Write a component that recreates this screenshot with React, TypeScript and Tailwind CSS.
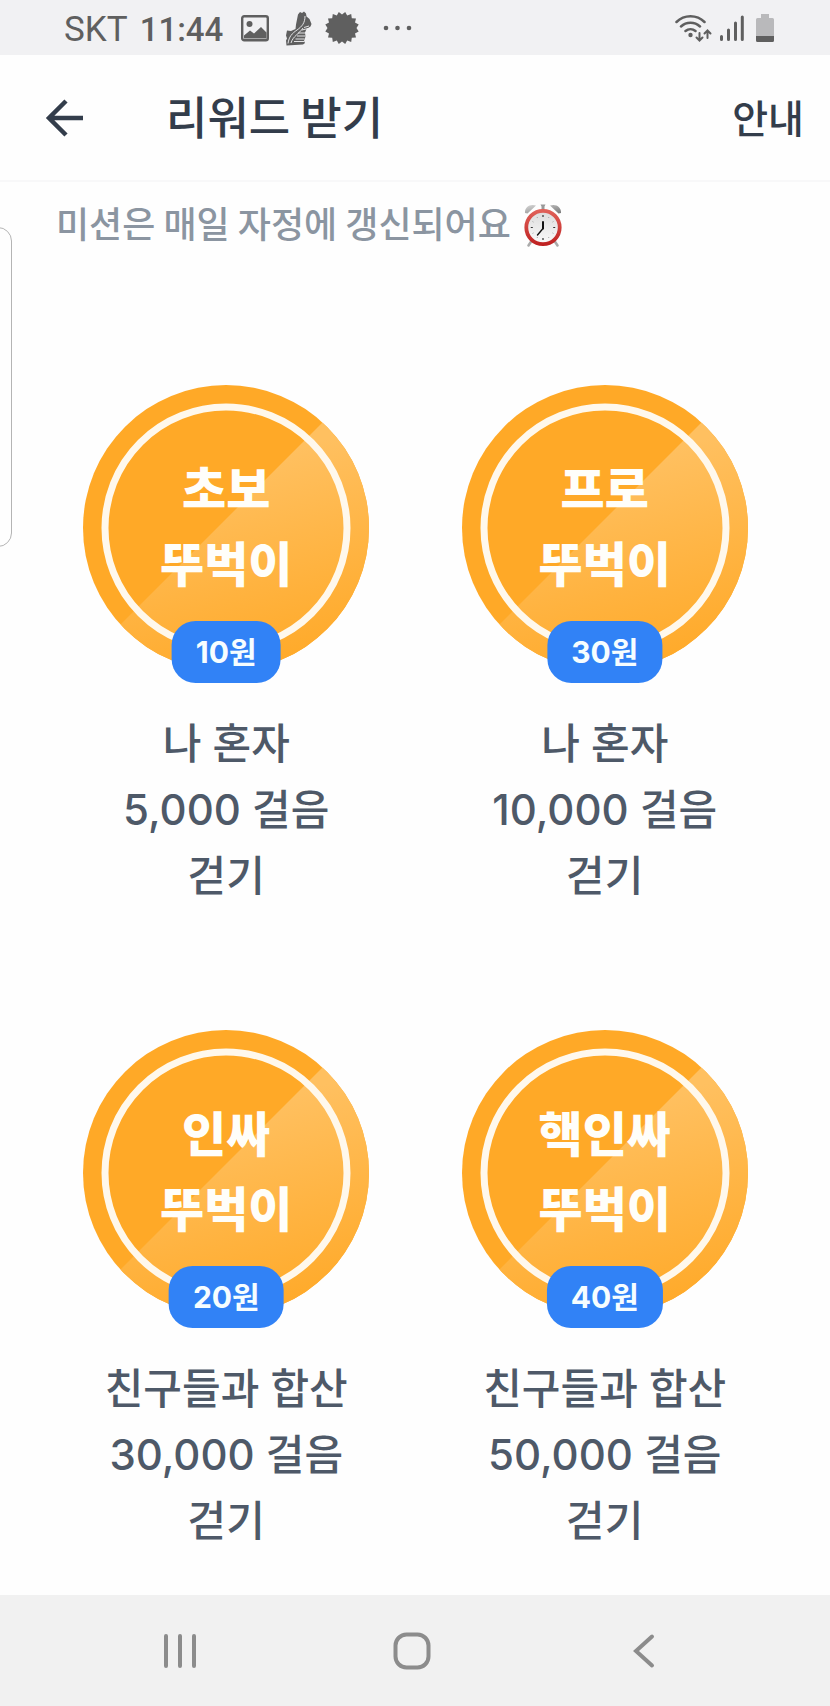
import type { ReactNode } from "react";

interface Mission {
  title: string;
  reward: string;
  lines: string[];
}

const missions: Mission[] = [
  { title: "초보", reward: "10원", lines: ["나 혼자", "5,000 걸음", "걷기"] },
  { title: "프로", reward: "30원", lines: ["나 혼자", "10,000 걸음", "걷기"] },
  { title: "인싸", reward: "20원", lines: ["친구들과 합산", "30,000 걸음", "걷기"] },
  { title: "핵인싸", reward: "40원", lines: ["친구들과 합산", "50,000 걸음", "걷기"] },
];

function StatusBar() {
  return (
    <div className="flex h-[55px] shrink-0 items-center justify-between bg-[#f1f1f3] pr-14 pl-16 font-['Roboto',sans-serif] text-[#5f5f5f]">
      <div className="flex items-center">
        <span className="pt-1 text-[35px] leading-[52px]">SKT</span>
        <span className="ml-3 pt-1 text-[33px] leading-[52px] font-medium">11:44</span>
        <svg className="ml-[18px] h-7 w-7" viewBox="0 0 28 28" fill="none">
          <rect x="1.2" y="2.2" width="25.6" height="24" rx="2" stroke="currentColor" strokeWidth="2.4" />
          <circle cx="8.5" cy="10" r="3" fill="currentColor" />
          <path d="M3 21.5l6-5 4 3 7-6.500 5.500 5.500v6H3z" fill="currentColor" />
        </svg>
        <svg className="ml-4 h-9 w-7" viewBox="0 0 28 36">
          <path
            d="M13 4.500l2-2.500 2 1 2-1.500 2 2 .5 3 3 2.500 2 5-1 2.500-4 2.500-1.500 3.500.5 4-1.500 4.500 1 2-2 1.500-16.500 1-.5-5 1-2-1-3 1-5 4 .5 4.500-2 .5-4.500z"
            fill="currentColor"
          />
          <path
            d="M3 33.500c1-7 4-10 9-13.500s8-7 8-14M6 33c2-7 8-9 12-15M13 23h8M12 26h8.500M10.500 29h9M9 31.500h10M19 17.500l5-1.500M17 20l6-1.500"
            fill="none"
            stroke="#f1f1f3"
            strokeWidth="0.9"
          />
        </svg>
        <svg className="ml-3 h-[34px] w-[34px]" viewBox="0 0 34 34" fill="currentColor">
          <path d="M17 3.500L20.200 .9 22.200 4.400 26.200 3.100 26.800 7.200 31 7.500 30 11.500 33.700 13.400 31.500 17 33.700 20.600 30 22.500 31 26.500 26.800 26.800 26.200 30.900 22.200 29.600 20.200 33.100 17 30.500 13.800 33.100 11.800 29.600 7.800 30.900 7.200 26.800 3 26.500 4 22.500 .3 20.600 2.500 17 .3 13.400 4 11.500 3 7.500 7.200 7.200 7.800 3.100 11.800 4.400 13.800 .9z" />
        </svg>
        <svg className="ml-6 h-2 w-[30px]" viewBox="0 0 30 8" fill="currentColor">
          <circle cx="3" cy="4" r="2.300" />
          <circle cx="14.500" cy="4" r="2.300" />
          <circle cx="26" cy="4" r="2.300" />
        </svg>
      </div>

      <div className="flex items-center gap-2">
        <svg className="h-7 w-[37px]" viewBox="0 0 37 28" fill="none" stroke="currentColor" strokeWidth="2.500" strokeLinecap="round">
          <path d="M1.500 8a20 20 0 0 1 28 0M6 12.500a14 14 0 0 1 19 0M10.500 17a8 8 0 0 1 10 0" />
          <circle cx="15.500" cy="21" r="2.200" fill="currentColor" stroke="none" />
          <path d="M24.500 19v7M21.500 23.500l3 3 3-3M32.500 24v-7M29.500 19.500l3-3 3 3" strokeWidth="2" />
        </svg>
        <svg className="h-7 w-6" viewBox="0 0 24 28" fill="none" stroke="currentColor" strokeWidth="3" strokeLinecap="round">
          <path d="M1.500 22.500v3M8.500 16v9.500M15.500 9v16.500M22.300 3v22.500" />
        </svg>
        <svg className="ml-1 h-7 w-[18px]" viewBox="0 0 18 28">
          <path d="M5 0h8v4h3.500a1.500 1.500 0 0 1 1.500 1.500V22H0V5.500A1.500 1.500 0 0 1 1.500 4H5z" fill="#b9b9bb" />
          <path d="M0 22h18v4.500a1.500 1.500 0 0 1-1.500 1.500h-15A1.500 1.500 0 0 1 0 26.500z" fill="currentColor" />
        </svg>
      </div>
    </div>
  );
}

function Header() {
  return (
    <header className="flex h-[127px] shrink-0 items-center border-b-2 border-[#f8f8f9] pr-[26px] pl-11 text-[#333d4b]">
      <button type="button" aria-label="뒤로" className="h-10 w-10">
        <svg className="h-10 w-10" viewBox="0 0 40 40" fill="none" stroke="currentColor" strokeWidth="4.500">
          <path d="M39 20H5M22 3L5 20l17 17" />
        </svg>
      </button>
      <h1 className="ml-[82px] pb-1 text-[45px] leading-[60px] font-medium">리워드 받기</h1>
      <button type="button" className="ml-auto pb-1 text-[39px] leading-[60px] font-medium">
        안내
      </button>
    </header>
  );
}

function AlarmClock() {
  return (
    <svg className="h-11 w-10" viewBox="0 0 40 44">
      <defs>
        <linearGradient id="bell" x1="0" y1="0" x2="1" y2="1">
          <stop offset="0" stopColor="#d8d8d8" />
          <stop offset="1" stopColor="#777" />
        </linearGradient>
        <linearGradient id="rim" x1="0" y1="0" x2="0" y2="1">
          <stop offset="0" stopColor="#e06058" />
          <stop offset="1" stopColor="#bf2222" />
        </linearGradient>
        <linearGradient id="face" x1="0" y1="0" x2="0" y2="1">
          <stop offset="0" stopColor="#dcdcdc" />
          <stop offset="1" stopColor="#fafafa" />
        </linearGradient>
      </defs>
      <path d="M8.500 38l-3 4.500M31.500 38l3 4.500" stroke="#aaa" strokeWidth="2.500" strokeLinecap="round" />
      <path d="M17.500 1.500h5l-1 2v4h-3v-4z" fill="#999" />
      <path d="M2 10C1.500 4 7 .5 13 2.500L4.500 10.500zM38 10C38.500 4 33 .5 27 2.500l8.500 8z" fill="url(#bell)" />
      <circle cx="20" cy="24.500" r="16.700" fill="url(#face)" stroke="url(#rim)" strokeWidth="3.800" />
      <path d="M20 12v2M20 35v2M7.800 24.500h2M30.200 24.500h2" stroke="#333" strokeWidth="1.200" />
      <path d="M26 14l-.6 1M14 14l.6 1M30.500 18.500l-1 .6M9.500 18.500l1 .6M30.500 30.500l-1-.6M9.500 30.500l1-.6M26 35l-.6-1M14 35l.6-1" stroke="#999" strokeWidth=".8" />
      <path d="M20 19v6.500" stroke="#111" strokeWidth="2" strokeLinecap="round" />
      <path d="M20 25.500l-5.500 6.500" stroke="#111" strokeWidth="1.400" strokeLinecap="round" />
    </svg>
  );
}

function Medal({ title, reward, id }: { title: string; reward: string; id: string }) {
  return (
    <div className="relative flex h-[286px] w-[286px] flex-col items-center pt-16">
      <svg className="absolute inset-0 h-full w-full" viewBox="0 0 286 286" aria-hidden="true">
        <defs>
          <clipPath id={`${id}-clip`}>
            <circle cx="143" cy="143" r="143" />
          </clipPath>
          <linearGradient id={`${id}-shine`} gradientUnits="userSpaceOnUse" x1="150" y1="80" x2="205" y2="275">
            <stop offset="0" stopColor="#ffc060" />
            <stop offset="1" stopColor="#ffaa2a" />
          </linearGradient>
        </defs>
        <circle cx="143" cy="143" r="143" fill="#ffa927" />
        <path d="M277 0H286V286H0V277z" fill={`url(#${id}-shine)`} clipPath={`url(#${id}-clip)`} />
        <circle cx="143" cy="143" r="121" fill="none" stroke="#fff8ec" strokeWidth="7" />
      </svg>
      <p className="relative text-center text-[48px] leading-[75px] font-black text-[#fffefa]">
        {title}
        <br />
        뚜벅이
      </p>
      <span className="absolute -bottom-3 left-1/2 flex h-[62px] -translate-x-1/2 items-center rounded-3xl bg-[#3182f6] px-6 font-['Inter','Noto_Sans_CJK_KR',sans-serif] text-[30px] font-bold whitespace-nowrap text-[#f6fdff]">
        {reward}
      </span>
    </div>
  );
}

function NavButton({ label, children }: { label: string; children: ReactNode }) {
  return (
    <button type="button" aria-label={label} className="flex items-center justify-center">
      <svg className="h-10 w-10" viewBox="0 0 40 40" fill="none" stroke="#8c8c8c" strokeWidth="4" strokeLinecap="round">
        {children}
      </svg>
    </button>
  );
}

export default function App() {
  return (
    <div className="relative flex min-h-screen flex-col overflow-hidden bg-[#fefefe] font-['Noto_Sans_CJK_KR',sans-serif]">
      <StatusBar />
      <Header />

      {/* edge panel handle */}
      <div className="absolute top-[227px] -left-4 h-80 w-7 rounded-2xl border border-[#b4b4b4]" />

      <main className="flex-1 pb-10">
        <div className="flex items-center gap-3 pt-[18px] pl-14">
          <p className="pb-1.5 text-[36px] leading-[44px] font-medium text-[#8b95a1]">미션은 매일 자정에 갱신되어요</p>
          <AlarmClock />
        </div>

        <ul className="mt-[135px] grid grid-cols-2 gap-y-[121px] pr-9 pl-[37px]">
          {missions.map((m, i) => (
            <li key={m.title} className="flex flex-col items-center">
              <Medal title={m.title} reward={m.reward} id={`medal-${i}`} />
              <p className="mt-10 text-center font-['Inter','Noto_Sans_CJK_KR',sans-serif] text-[42px] leading-[66px] font-medium text-[#4e5968]">
                {m.lines.map((line) => (
                  <span key={line} className="block">
                    {line}
                  </span>
                ))}
              </p>
            </li>
          ))}
        </ul>
      </main>

      <nav className="grid h-[111px] shrink-0 grid-cols-3 bg-[#f1f1f1] pr-[70px] pl-16">
        <NavButton label="최근 앱">
          <path d="M6 5v30M20 5v30M34 5v30" />
        </NavButton>
        <NavButton label="홈">
          <rect x="3.500" y="3.500" width="33" height="33" rx="11" />
        </NavButton>
        <NavButton label="이전">
          <path d="M28 5.500L12 20l16 14.500" />
        </NavButton>
      </nav>
    </div>
  );
}
